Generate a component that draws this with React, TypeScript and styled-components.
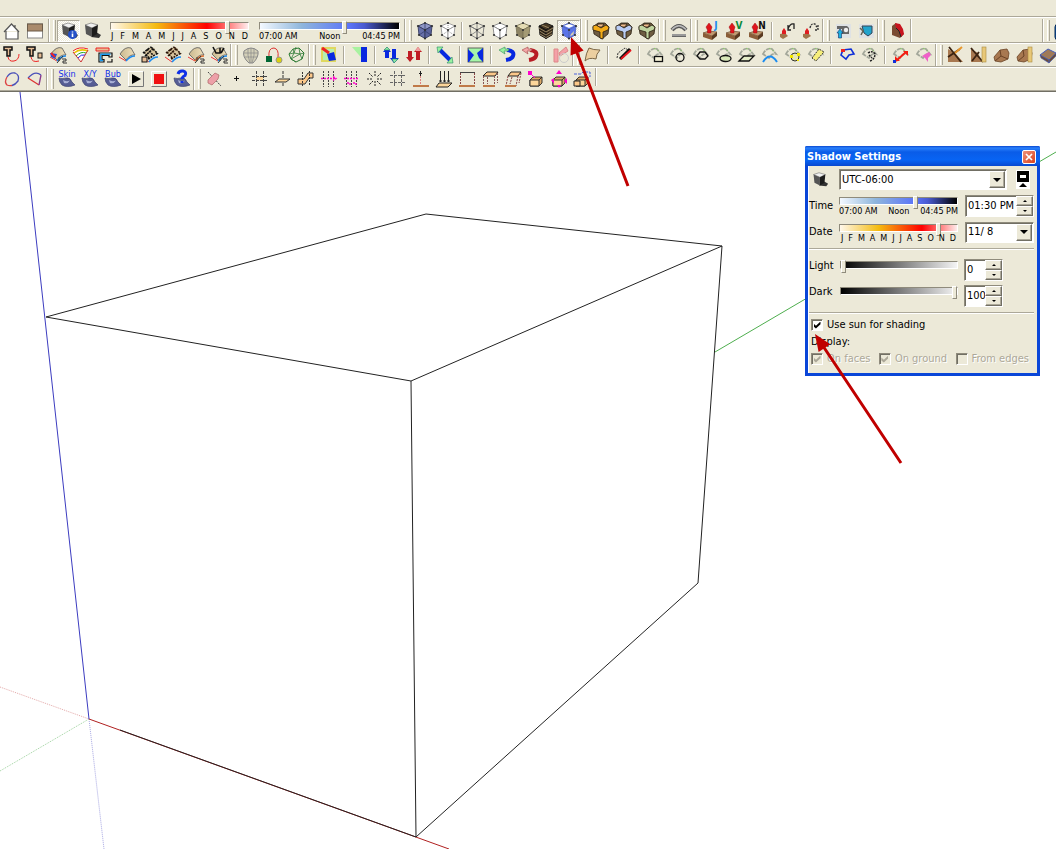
import React, { useState } from "react";
import styled, { createGlobalStyle, css } from "styled-components";

const face = "#ece9d8";
const shade = "#aca899";

const GlobalStyle = createGlobalStyle`
  *, *::before, *::after { box-sizing: border-box; }
  body {
    margin: 0;
    background: #fff;
    color: #000;
    font: 11px/14px "DejaVu Sans Condensed", "Noto Sans", Tahoma, sans-serif;
  }
  button, input, select { font: inherit; color: inherit; margin: 0; padding: 0; border-radius: 0; }
`;

const Page = styled.div`
  display: flex;
  flex-direction: column;
  min-height: 100vh;
  overflow-x: clip;
`;

const Toolbars = styled.header`
  position: relative;
  z-index: 1;
  padding-top: 17px;
  background: ${face};
  border-bottom: 1px solid #716f64;
`;

const ToolRow = styled.div`
  display: flex;
  height: 24px;
  border-top: 1px solid #fff;
  border-bottom: 1px solid ${shade};
  &:first-child {
    height: 26px;
    padding-top: 1px;
    box-shadow: 0 -1px 0 ${shade};
  }
`;

const ToolGroup = styled.div<{ $wide?: boolean; $end?: number }>`
  display: flex;
  flex: none;
  align-items: center;
  padding-right: ${(p) => p.$end ?? 0}px;
`;

const Grip = styled.div`
  flex: none;
  align-self: stretch;
  width: 9px;
  padding: 1px 0 1px 4px;
  border-left: 1px solid ${shade};
  box-shadow: inset 1px 0 0 #fff;
  &::after {
    content: "";
    display: block;
    width: 3px;
    height: 100%;
    background: ${face};
    border-left: 1px solid #fff;
    border-right: 1px solid ${shade};
  }
`;

const Separator = styled.div<{ $narrow?: boolean }>`
  flex: none;
  width: 2px;
  height: 18px;
  margin: 0 ${(p) => (p.$narrow ? 2 : 3)}px;
  border-left: 1px solid ${shade};
  border-right: 1px solid #fff;
`;

const ToolButton = styled.button<{ $pressed?: boolean }>`
  position: relative;
  flex: none;
  display: grid;
  place-items: center;
  width: 23px;
  height: 22px;
  border: 1px solid transparent;
  background: none;
  ${(p) =>
    p.$pressed &&
    css`
      border-color: ${shade} #fff #fff ${shade};
      background: repeating-conic-gradient(#fff 0 25%, ${face} 0 50%) 0 0 / 2px 2px;
    `}
`;

const Glyph = styled.svg`
  display: block;
  width: 20px;
  height: 20px;
  overflow: visible;
`;

const Sliders = styled.div`
  display: flex;
  gap: 10px;
  padding: 0 4px 0 7px;
`;

const Scale = styled.div<{ $width: number }>`
  display: flex;
  flex-direction: column;
  width: ${(p) => p.$width}px;
  padding-top: 2px;
`;

const ramps = {
  date: "linear-gradient(90deg, #fff8ec, #f4bb10 33%, #ff0000 70%, #ffecec)",
  time: "linear-gradient(90deg, #f4f9ff, #8fb6dc 30%, #5b74f8 64%, #4a5ad0 75%, #000)",
  grey: "linear-gradient(90deg, #000, #f4f4f4)",
};

const Range = styled.input<{ $ramp: keyof typeof ramps }>`
  appearance: none;
  display: block;
  width: 100%;
  height: 9px;
  background: none;
  &::-webkit-slider-runnable-track {
    height: 8px;
    margin-bottom: 1px;
    border: 1px solid;
    border-color: #8f8b7c #fff #fff #8f8b7c;
    background: ${(p) => ramps[p.$ramp]};
  }
  &::-webkit-slider-thumb {
    appearance: none;
    width: 5px;
    height: 13px;
    margin-top: -2px;
    background: ${face};
    border: 1px solid;
    border-color: #fff #8f8b7c #8f8b7c #fff;
  }
`;

const Ticks = styled.div<{ $inset?: number }>`
  display: flex;
  justify-content: space-between;
  padding: 0 ${(p) => p.$inset ?? 0}px;
  font-size: 9px;
  line-height: 10px;
  white-space: nowrap;
`;

const Canvas = styled.main`
  position: relative;
  flex: 1;
  background: #fff;
`;

const Scene = styled.svg`
  display: block;
  width: 100%;
`;

const Dialog = styled.section`
  position: absolute;
  top: 54px;
  right: 16px;
  z-index: 2;
  width: 235px;
  border: 3px solid #0a46d8;
  border-top: 0;
  border-radius: 2px 2px 0 0;
  background: ${face};
  box-shadow: inset 1px 0 0 #fff;
`;

const TitleBar = styled.div`
  display: flex;
  align-items: center;
  justify-content: space-between;
  height: 20px;
  margin: 0 -3px;
  padding: 1px 4px 0 2px;
  border-radius: 2px 2px 0 0;
  background: linear-gradient(#0a48d0, #2a80fb 10%, #0a5ce8 30%, #0864f4 70%, #0848d0);
`;

const Title = styled.h2`
  margin: 0;
  color: #fff;
  font-size: 11px;
  line-height: 14px;
`;

const CloseButton = styled.button`
  display: grid;
  place-items: center;
  width: 14px;
  height: 14px;
  border: 1px solid #fff;
  border-radius: 2px;
  background: linear-gradient(135deg, #f0937a, #d8401c);
`;

const Body = styled.div`
  padding: 3px 3px 0 1px;
`;

const Field = styled.div<{ $height: number }>`
  display: grid;
  grid-template-columns: 30px 1fr auto;
  align-items: center;
  height: ${(p) => p.$height}px;
`;

const Rule = styled.hr`
  height: 2px;
  margin: 5px 0 4px;
  border: 0;
  border-top: 1px solid ${shade};
  border-bottom: 1px solid #fff;
`;

const sunken = css`
  border: 1px solid;
  border-color: #8f8b7c #fff #fff #8f8b7c;
  box-shadow: inset 1px 1px 0 #716f64;
  background: #fff;
`;

const raised = css`
  border: 1px solid;
  border-color: #fff #716f64 #716f64 #fff;
  box-shadow: inset -1px -1px 0 ${shade};
  background: ${face};
`;

const SelectBox = styled.span<{ $width: number }>`
  position: relative;
  display: flex;
  width: ${(p) => p.$width}px;
  height: 21px;
  ${sunken}
`;

const Select = styled.select`
  appearance: none;
  flex: 1;
  min-width: 0;
  padding-left: 2px;
  border: 0;
  background: none;
  outline: 0;
`;

const DropArrow = styled.span`
  position: absolute;
  top: 1px;
  right: 1px;
  bottom: 1px;
  display: grid;
  place-items: center;
  width: 16px;
  pointer-events: none;
  ${raised}
`;

const Triangle = styled.i<{ $up?: boolean; $size: number }>`
  width: 0;
  border: ${(p) => p.$size}px solid transparent;
  border-top: ${(p) => (p.$up ? "0" : `${p.$size}px solid #000`)};
  border-bottom: ${(p) => (p.$up ? `${p.$size}px solid #000` : "0")};
`;

const SpinBox = styled.span<{ $width: number }>`
  display: flex;
  width: ${(p) => p.$width}px;
  height: 22px;
  ${sunken}
`;

const SpinInput = styled.input`
  flex: 1;
  min-width: 0;
  padding-left: 2px;
  border: 0;
  outline: 0;
  background: none;
`;

const SpinButtons = styled.span`
  display: grid;
  width: 17px;
`;

const SpinButton = styled.button`
  display: grid;
  place-items: center;
  height: 10px;
  ${raised}
`;

const Roller = styled.button`
  display: grid;
  justify-items: center;
  align-content: space-between;
  width: 14px;
  height: 19px;
  margin-right: 4px;
  padding: 0 0 1px;
  border: 1px solid #fff;
  background: #fff;
  &::before {
    content: "";
    width: 12px;
    height: 11px;
    border: solid #000;
    border-width: 4px 3px;
    background: #fff;
  }
`;

const LightRows = styled.div`
  display: grid;
  gap: 4px;
  padding-top: 5px;
`;

const LightRow = styled.div`
  display: grid;
  grid-template-columns: 31px 124px auto;
  align-items: start;
`;

const CheckLabel = styled.label<{ $off?: boolean }>`
  display: flex;
  align-items: center;
  gap: 4px;
  white-space: nowrap;
  ${(p) => p.$off && `color: ${shade}; text-shadow: 1px 1px 0 #fff;`}
`;

const Check = styled.input`
  appearance: none;
  flex: none;
  display: grid;
  place-items: center;
  width: 12px;
  height: 12px;
  ${sunken}
  &:checked::before {
    content: "";
    width: 7px;
    height: 7px;
    background: #000;
    clip-path: polygon(0 30%, 35% 60%, 100% 0, 100% 40%, 35% 100%, 0 70%);
  }
  &:disabled { background: ${face}; }
  &:disabled::before { background: ${shade}; }
`;

const Checks = styled.div`
  display: flex;
  flex-direction: column;
  gap: 3px;
  padding: 0 0 7px 2px;
`;

const CheckRow = styled.div`
  display: flex;
  justify-content: space-between;
  padding-right: 5px;
`;

const Pointer = styled.svg<{ $left: number; $top: number }>`
  position: absolute;
  left: ${(p) => p.$left}px;
  top: ${(p) => p.$top}px;
  z-index: 3;
  overflow: visible;
  pointer-events: none;
`;

/* Empty stretch of toolbar between the last docked groups */
const Spacer = styled.div`
  flex: none;
  width: 132px;
  margin-left: 1px;
  border-left: 1px solid ${shade};
  box-shadow: inset 1px 0 0 #fff;
`;

/* ---------- icon drawings, all on a 20 x 20 grid ---------- */

const Cube = ({ top, left, right, line = "#222" }: { top: string; left: string; right: string; line?: string }) => (
  <g stroke={line} strokeWidth=".9" strokeLinejoin="round">
    <path d="M10 2 L17 5 L10 9 L3 5Z" fill={top} />
    <path d="M3 5 L10 9 V17.500 L4 14Z" fill={left} />
    <path d="M10 9 L17 5 L16 14 L10 17.500Z" fill={right} />
  </g>
);

const InnerEdges = ({ c, dash }: { c: string; dash?: string }) => (
  <path d="M10 2 V10 L4 14 M10 10 L16 14" stroke={c} strokeWidth=".8" strokeDasharray={dash} fill="none" />
);

const Corners = () => (
  <g fill="#333">
    <circle cx="3" cy="5" r="1.100" /><circle cx="10" cy="2" r="1.100" /><circle cx="17" cy="5" r="1.100" /><circle cx="10" cy="9" r="1.100" />
    <circle cx="4" cy="14" r="1.100" /><circle cx="16" cy="14" r="1.100" /><circle cx="10" cy="17.500" r="1.100" />
  </g>
);

const ShadowCube = () => (
  <g>
    <path d="M9 16 L17 17 L19 14 L14 11Z" fill="#333" />
    <path d="M3 4 L9 2 L16 4 L10 7Z" fill="#f0f0f0" stroke="#666" strokeWidth=".6" />
    <path d="M3 4 L10 7 L10 16 L4 13Z" fill="#555" />
    <path d="M10 7 L16 4 L15 13 L10 16Z" fill="#1c1c1c" />
  </g>
);

const Patch = ({ edge = "#1c8cf0", fill = "url(#sand)" }: { edge?: string; fill?: string }) => (
  <g>
    <path d="M3 9 Q8 1 14 3 L18 10 Q13 9 9 15Z" fill={fill} stroke="#555" strokeWidth=".8" />
    <path d="M2 12 L9 16" stroke="#e33" fill="none" /><path d="M9 16 Q13 11 18 11" stroke={edge} fill="none" strokeWidth="1.500" />
  </g>
);

const Half = () => <path d="M9 18 L15 11 M11 12 v4 M14 14 h4 v2 h-3 v2 h4" stroke="#333" fill="none" />;

const Mesh = ({ c = "#111" }: { c?: string }) => (
  <g>
    <path d="M4 8 Q9 1 14 3 L18 9 Q13 9 9 14Z" fill="#d8c49c" />
    <path d="M3 8 L11 2 M5 11 L14 3 M8 14 L18 8 M7 4 L14 11 M4 7 L10 14 M11 2 L18 9" stroke={c} strokeWidth="1.600" strokeDasharray="2 1" />
    <path d="M2 12 L9 17" stroke="#e33" /><path d="M9 17 Q13 12 18 12" stroke="#1c8cf0" fill="none" strokeWidth="1.500" />
  </g>
);

const Sketch = () => (
  <g fill="none">
    <path d="M3 9 Q7 2 12 4 L16 9 Q12 8 9 13 Z" stroke="#a3a79a" strokeWidth="1.800" strokeDasharray="4 1" />
    <path d="M9 3.500 L12 4 L15 8" stroke="#8cc46c" strokeDasharray="2 2" />
  </g>
);

const Plank = ({ c = "#c09a70" }: { c?: string }) => (
  <g><path d="M2 12 L8 10 L16 11 L11 15Z" fill={c} stroke="#5c3d22" strokeWidth=".6" /><path d="M2 12 L11 15 V19 L2 16Z" fill="#8a5d38" /><path d="M11 15 L16 11 V15 L11 19Z" fill="#5a3a20" /></g>
);

const RedUp = () => <path d="M8 2 L11 6 L10 9 V12 H6.500 V9 L5 6Z" fill="#e0141c" stroke="#9c1014" strokeWidth=".5" />;

const Letter = ({ children, x, c, size = 10, bold }: { children: string; x: number; c: string; size?: number; bold?: boolean }) => (
  <text x={x} y="8" fontSize={size} fontWeight={bold ? 700 : 400} fontFamily="DejaVu Sans Condensed, sans-serif" fill={c} textAnchor="middle">{children}</text>
);

const Soap = () => (
  <g><path d="M2 9 Q5 10 9 9 Q13 8 15 13 L18 16 Q10 19 5 16 Q2 13 2 9Z" fill="#565d94" stroke="#3c4270" strokeWidth=".7" /><path d="M6 11 Q9 13 13 11.500 Q11 15 7 14Z" fill="#a9b0d6" /></g>
);

const Stump = ({ c }: { c: string }) => (
  <g stroke="#2c2114" strokeWidth=".8" strokeLinejoin="round">
    <path d="M2 6 L7 2 L14 2 L18 6 L17 13 L11 18 L3 13Z" fill="#6e5c42" />
    <path d="M7 3 L13 3 L11 6 H6Z" fill="#edb98a" />
    <path d="M2 5 L5 4 L10 7 L15 4 L18 6 L17 9 L12 11 V18 L9 17 V11 L2 9Z" fill={c} />
  </g>
);

const TShape = () => <path d="M2 2 H10 V5 H8 V11 H5 V5 H2Z" fill="#e6bd95" stroke="#111" strokeWidth="1.500" />;

const Box3 = () => (
  <g stroke="#222" strokeWidth=".9"><path d="M4 11 L7 8 H16 V14 L13 17 H4Z" fill="#d9a868" /><path d="M4 11 H13 V17 H4Z" fill="#fcd69a" /><path d="M13 11 L16 8" /></g>
);

const Vert = ({ pink }: { pink?: string }) => (
  <g fill="none"><path d="M4.500 2 V18 M9.500 2 V18 M14.500 2 V18" stroke="#444" strokeDasharray="2 1" /><path d={pink} stroke="#f0c" strokeDasharray="2 1" strokeWidth="1.400" /></g>
);

const Log = () => <path d="M2 12 L8 5 L15 4 L17 8 L16 14 L9 17 L3 16Z" fill="#a87850" stroke="#6a4225" strokeWidth=".8" />;

const icons: Record<string, React.ReactNode> = {
  home: <path d="M2 11 L9.500 3 L17 11 M4 10 V18 H16 V10 M13 4 V7" fill="#fff" stroke="#555" strokeWidth="1.200" />,
  panel: <g><rect x="2.500" y="3" width="15" height="14" fill="#fff" stroke="#888" /><rect x="2.500" y="3" width="15" height="7" fill="#a98a6c" stroke="#6b5a48" /></g>,
  shadowInfo: <g><ShadowCube /><circle cx="13.500" cy="13.500" r="4.500" fill="#2450c8" /><path d="M13.500 12.500 V16 M13.500 10.500 V11.500" stroke="#fff" strokeWidth="1.600" /></g>,
  shadow: <ShadowCube />,
  xray: <g><Cube top="#8f97c6" left="#6770aa" right="#5a639c" line="#333a60" /><InnerEdges c="#333c70" /><Corners /></g>,
  backEdges: <g><Cube top="#fff" left="#fff" right="#fff" line="#999" /><InnerEdges c="#777" dash="1 1" /><Corners /></g>,
  wire: <g><Cube top="none" left="none" right="none" line="#777" /><InnerEdges c="#777" /><Corners /></g>,
  hidden: <g><Cube top="#fff" left="#fff" right="#fff" line="#888" /><Corners /></g>,
  shaded: <g><Cube top="#e4dcb4" left="#8d8464" right="#a39a74" line="#7d7658" /><Corners /></g>,
  textured: <g><Cube top="#4a3a24" left="#2b2216" right="#3a2c1a" line="#111" /><path d="M3 7 L10 11 L17 7 M3.500 10 L10 14 L16.500 10 M4 13 L10 16.500 L16 13 M6 4 L13 7" stroke="#a3906a" fill="none" strokeWidth=".9" /></g>,
  mono: <g><Cube top="#5a74e8" left="#5a74e8" right="#5a74e8" line="#5468c0" /><path d="M12 13 L15 10 L14.500 13.500 L11 15.500Z" fill="#d8d0b0" /><path d="M5 4.700 L10 3 L15 4.700 L10 7Z" fill="#fff" /><Corners /></g>,
  stumpGold: <Stump c="#f2ab18" />, stumpBlue: <Stump c="#b9ccf4" />, stumpGreen: <Stump c="#c0d4a0" />,
  arc: <g fill="none"><path d="M3 9 Q10 1 17 9" stroke="#555" strokeWidth="4" /><path d="M3 8.500 Q10 1 17 8.500" stroke="#bbb" strokeWidth="1.500" /><path d="M3 14.500 H17" stroke="#666" strokeWidth="3" /><path d="M3 14 H17" stroke="#ccc" /></g>,
  upJ: <g><Plank /><RedUp /><Letter x={15} c="#1c8cf0" bold>J</Letter></g>,
  upV: <g><Plank /><RedUp /><Letter x={15} c="#0a8a3a" bold>V</Letter></g>,
  upN: <g><Plank /><RedUp /><Letter x={15} c="#111" bold>N</Letter></g>,
  upBack: <g><path d="M2 13 L7 12 L10 15 L5 18 L2 16Z" fill="#a0744a" /><path d="M6 7 L8 10 V13 H4 V10Z" fill="#e01c20" /><path d="M10 8 Q12 2 16 3 V8 M10 4 V9 H13" fill="none" stroke="#222" strokeWidth="1.300" /></g>,
  upFwd: <g><path d="M2 13 L7 12 L10 15 L5 18 L2 16Z" fill="#a0744a" /><path d="M6 7 L8 10 V13 H4 V10Z" fill="#e01c20" /><path d="M9 7 Q10 2 14 3 L17 8 M17 4 V9 H13" fill="none" stroke="#333" strokeWidth="1.300" strokeDasharray="2 1" /></g>,
  camUp: <g><rect x="3" y="3" width="15" height="14" fill="#dfe2e4" /><path d="M4 5 L14 5 L16 7 V13 H9 V8 H4Z" fill="#666" /><circle cx="13" cy="9" r="2.200" fill="#eee" /><path d="M7 8 L10 12 H8.500 V17 H5.500 V12 H4Z" fill="#1cb0e0" stroke="#136" strokeWidth=".6" /></g>,
  camShield: <g><rect x="3" y="3" width="15" height="14" fill="#dfe2e4" /><path d="M6 5 H16 V12 L12 15 L8 12Z" fill="#22a4cc" stroke="#345" /><path d="M4 7 L7 10 L5 14" stroke="#665" strokeWidth="1.500" fill="none" /></g>,
  book: <g><path d="M4 5 L8 2 L16 13 L12 17 L4 14Z" fill="#7a4b32" /><path d="M7 2 L12 3 L15 8 L16 13 L13 16 L11 10 L8 7Z" fill="#c8141e" /><path d="M8 7 L11 10 L13 16" stroke="#222" fill="none" /></g>,
  blue: <rect x="2" y="3" width="14" height="16" rx="3" fill="#0e4f9c" stroke="#052a5a" />,

  t1: <g><TShape /><path d="M6 12 Q7 17 12 16 Q17 15 17 9" stroke="#e22" fill="none" /></g>,
  t2: <g><TShape /><rect x="13" y="8" width="4" height="5" fill="#e6bd95" stroke="#111" /><path d="M6 12 Q7 18 14 16" stroke="#e22" fill="none" /></g>,
  roof: <g><Patch /><path d="M2 8 L9 9 L7 14 L3 12Z" fill="#1c50e0" /><path d="M3 8 L7 12" stroke="#e22" strokeWidth="2" /><Half /></g>,
  rainbow: <g fill="none"><path d="M2 7 Q8 1 17 4 L17 6 L10 17Z" fill="#fff" /><path d="M2 6 Q8 1 17 4" stroke="#e22" /><path d="M3 8 Q9 3 17 6" stroke="#e9c400" strokeWidth="1.500" /><path d="M5 11 Q10 6 15 8" stroke="#2a2" /><path d="M7 13 Q10 9 14 10" stroke="#22e" /><path d="M2 7 L10 17 L17 5" stroke="#c33" /></g>,
  clamp: <g fill="none"><path d="M2 3 H15 V6 H2Z" fill="#e6bd95" stroke="#e22" /><path d="M5 8 H18 V12 H15 V10.500 H8 V14.500 H10 V17 H5Z M18 14 V17 H13" stroke="#111" strokeWidth="1.200" /><path d="M6.500 9.200 H16.500 M6.500 9 V15.500 H9" stroke="#1c9cf0" strokeWidth="1.500" /></g>,
  patch: <Patch />, mesh1: <g><Mesh /><rect x="2" y="12" width="5" height="5" fill="#e6bd95" stroke="#111" /></g>, mesh2: <Mesh c="#2a1408" />,
  patchHalf: <g><Patch edge="#e07030" /><Half /></g>,
  patchCut: <g><Patch /><path d="M4 2 L7 8 L11 8 V3 M15 3 L12 8" stroke="#111" strokeWidth="1.600" fill="none" /><Half /></g>,
  shell: <g><path d="M3 6 Q10 0 17 6 Q18 12 12 18 H8 Q1 12 3 6Z" fill="#d3cfb8" stroke="#888" /><path d="M3 8 H17 M4 12 H16 M7 3 Q6 10 9 18 M10 3 V18 M13 3 Q14 10 11 18" stroke="#888" strokeWidth=".7" fill="none" /></g>,
  hook: <g><path d="M5 12 Q4 3 10 3 Q15 4 14 12" stroke="#d33" fill="none" /><rect x="2" y="11" width="6" height="6" fill="#063" /><circle cx="15" cy="15" r="3" fill="#d9d010" stroke="#998" /></g>,
  gem: <g fill="none" stroke="#2c7a34"><path d="M2 9 L6 4 L12 3 L17 8 L15 14 L9 17 L4 14Z" /><path d="M6 4 L7 8 L13 9 L12 3 M7 8 L4 14 L9 17 M13 9 L17 8 M13 9 L15 14 M7 8 L2 9 M4 14 L13 9 M9 2 L7 8" strokeWidth=".8" /></g>,
  sq1: <g><rect x="3" y="3" width="13" height="13" fill="#b6f0b0" stroke="#dfd860" strokeWidth="2" /><path d="M8 9 L15 7 L17 15 L10 16Z" fill="#0828e0" /><path d="M3 3 L10 8" stroke="#e22" strokeWidth="3" /></g>,
  tri: <g><path d="M2 2 L13 2 L15 17Z" fill="#a8f2a0" /><rect x="11" y="2" width="6" height="15" fill="#0828e0" /></g>,
  upDownBlue: <g><path d="M6 2 L10 7 H8 V13 H4 V7 H2Z" fill="#0828e0" /><path d="M13 18 L9 13 H11 V4 H15 V13 H18Z" fill="#0828e0" /><path d="M6 2 L9 5 H3Z M13 18 L17 14 H11Z" fill="#8fe8a0" stroke="#286" strokeWidth=".6" /></g>,
  upDownRed: <g><path d="M6 17 L2 12 H4 V6 H8 V12 H10Z" fill="#c01c24" /><path d="M14 2 L18 7 H16 V15 H12 V7 H10Z" fill="#c01c24" /><path d="M14 2 L17 6 H11Z" fill="#f0a0a0" /></g>,
  diag: <g><path d="M5 5 L15 15" stroke="#0828e0" strokeWidth="4" /><path d="M2 2 H8 L3 8Z M18 18 H12 L17 12Z" fill="#9af2a0" stroke="#286" strokeWidth=".6" /></g>,
  bow: <g><rect x="2" y="3" width="15" height="14" fill="#a6f6a8" stroke="#444" strokeWidth=".8" /><path d="M2 4 L8 10 L3 17 L2 17Z M17 3 L11 8 L13 13 L17 17Z" fill="#0828e0" /></g>,
  turnBlue: <g fill="none"><path d="M10 5 Q18 6 16 11 Q15 14 9 15" stroke="#0828e0" strokeWidth="4" /><path d="M8 2 L2 5 L8 9 L7 6 H11 L12 4 H8Z" fill="#9af2a0" stroke="#496" strokeWidth=".7" /></g>,
  turnRed: <g fill="none"><path d="M10 5 Q18 6 16 11 Q15 14 9 15" stroke="#b81c24" strokeWidth="4" /><path d="M8 2 L2 5 L8 9 L7 6 H11 L12 4 H8Z" fill="#f4a8a8" stroke="#a55" strokeWidth=".7" /></g>,
  pinkTurn: <g><path d="M3 4 H7 V17 H3Z M8 8 L15 2 L17 6 L9 11Z" fill="#f4a0a8" stroke="#d88" /><circle cx="13" cy="13" r="4.500" fill="none" stroke="#ccc" /></g>,
  sheet: <path d="M2 16 Q3 8 6 3 Q10 5 17 5 Q13 9 13 14 Q6 12 2 16Z" fill="#eccfa0" stroke="#7c6746" />,
  knife: <g><path d="M3 13 L4 8 L11 3 L14 5" stroke="#333" fill="none" strokeDasharray="2 1" /><path d="M6 14 L16 4" stroke="#111" strokeWidth="3" /><path d="M7 14 L17 5" stroke="#e8141c" strokeWidth="2" /></g>,
  skRect: <g><Sketch /><rect x="9.500" y="11.500" width="8" height="5" fill="#f6f2d8" stroke="#111" strokeWidth="1.300" /></g>,
  skCircle: <g><Sketch /><circle cx="12" cy="12.500" r="4" fill="none" stroke="#111" strokeWidth="1.300" /></g>,
  skHex: <g><Sketch /><path d="M6 11 L9 7 H14 L17 11 L14 14 H9Z" fill="none" stroke="#111" strokeWidth="1.300" /></g>,
  skOval: <g><Sketch /><ellipse cx="11.500" cy="13.500" rx="5.500" ry="3" fill="#d8e8b8" stroke="#111" strokeWidth="1.300" /></g>,
  skPara: <g><Sketch /><path d="M2 16 L7 11 H17 L12 16Z" fill="#e4ecc8" stroke="#111" strokeWidth="1.300" /></g>,
  skArc: <g><Sketch /><path d="M3 17 Q10 6 17 17" fill="none" stroke="#1c8cf0" strokeWidth="2" /></g>,
  skSpot: <g><Sketch /><circle cx="12" cy="12" r="4" fill="#e8e8b0" stroke="#333" /><path d="M7 10 h3 v3 h-3z M14 8 h3 v3 h-3z M14 14 h2 v2 h-2z" fill="#f4e800" /></g>,
  skTag: <g><Sketch /><path d="M6 13 L13 4 L18 7 L10 16Z" fill="#f6ee7a" stroke="#333" strokeDasharray="2 1" /></g>,
  bluePatch: <g><path d="M4 10 L6 5 L14 4 L17 9 L12 10 L9 14Z" fill="none" stroke="#1030d8" strokeWidth="1.600" /><rect x="4" y="4" width="4" height="3" fill="#e22" /></g>,
  skLoop: <g><Sketch /><path d="M8 8 Q12 5 15 9 Q15 14 10 16 M9 10 L12 13" fill="none" stroke="#222" strokeDasharray="2 1" strokeWidth="1.500" /></g>,
  skArrow: <g><Sketch /><path d="M5 16 L15 7" stroke="#f41c10" strokeWidth="2" /><path d="M12 6 H17 V11Z M4 11 V16 H9Z" fill="#f41c10" /><rect x="2" y="15" width="3" height="3" fill="#1030d8" /></g>,
  skPink: <g><Sketch /><path d="M8 11 L15 7 L17 10 L14 13 L14 17 L11 13Z" fill="#f060c8" /></g>,
  wood1: <g><path d="M2 4 L9 8 L17 17 H2Z" fill="#a87850" /><path d="M3 2 L15 17 M2 12 L14 4" stroke="#3c2412" strokeWidth="1.800" /><path d="M9 8 L16 2" stroke="#e8962c" strokeWidth="2" /></g>,
  wood2: <g><path d="M2 4 L9 8 L13 17 H2Z" fill="#a87850" /><path d="M2 3 L14 17 M3 16 L10 7" stroke="#3c2412" strokeWidth="1.800" /><rect x="13" y="2" width="4" height="15" fill="#e8c878" stroke="#a88a40" strokeWidth=".6" /></g>,
  log1: <g><Log /><path d="M8 5 L9 11 L16 14 M9 11 L3 16" stroke="#6a4225" fill="none" /></g>,
  log2: <g><Log /><path d="M8 5 L9 11 L3 16" stroke="#6a4225" fill="none" /><rect x="13" y="2" width="4" height="15" fill="#e8c878" stroke="#a88a40" strokeWidth=".6" /></g>,
  tile: <g><path d="M2 10 L10 4 L18 8 L11 15Z" fill="#a07a58" stroke="#445cb8" /><path d="M2 10 L11 15 V18 L3 13Z M11 15 L18 8 V11 L11 18Z" fill="#6c4c34" stroke="#445cb8" strokeWidth=".6" /></g>,

  blob: <g fill="none" strokeWidth="1.300"><path d="M5 8 Q8 3 13 4 Q18 6 16 12 Q13 16 10 16.500" stroke="#4a50b8" /><path d="M5 8 Q2 13 5 16 Q7 17 10 16.500" stroke="#d44" /></g>,
  fan: <g fill="none" strokeWidth="1.300"><path d="M3 9 Q10 1 16 6" stroke="#4a50b8" /><path d="M3 9 L14 16" stroke="#d33" /><path d="M14 16 L16 6" stroke="#86388c" /></g>,
  skin: <g><Soap /><Letter x={10} c="#1030e8" size={9}>Skin</Letter></g>,
  xy: <g><Soap /><Letter x={10} c="#1030e8" size={9}>X/Y</Letter></g>,
  bub: <g><Soap /><Letter x={10} c="#1030e8" size={9}>Bub</Letter></g>,
  play: <g><path d="M2.500 17.500 V2.500 H17.500" stroke="#fff" fill="none" /><path d="M17.500 2.500 V17.500 H2.500" stroke="#777" fill="none" /><path d="M6 5 L15 10 L6 15Z" /></g>,
  stop: <g><path d="M2.500 17.500 V2.500 H17.500" stroke="#fff" fill="none" /><path d="M17.500 2.500 V17.500 H2.500" stroke="#777" fill="none" /><rect x="5" y="5" width="10" height="10" fill="#f01010" /></g>,
  help: <g><Soap /><path d="M6 5 Q7 1.500 11 2 Q15 3 13 6.500 Q10 8 10 10 M10 12 V14" stroke="#1030e8" strokeWidth="3" fill="none" /></g>,
  eraser: <g><path d="M4 3 L17 17" stroke="#444" strokeDasharray="2 1" /><path d="M4 11 L11 4 L15 6 L14 10 L8 16 L4 14Z" fill="#eda0a8" stroke="#a66" strokeWidth=".7" /></g>,
  dot: <path d="M9.500 7 V12 M7 9.500 H12" stroke="#111" />,
  grid1: <g><path d="M6 8 H13 V11 H6Z" fill="#fcd69a" /><path d="M6.500 2 V18 M13.500 2 V18 M2 7.500 H18 M2 11.500 H18" stroke="#444" strokeDasharray="3 1" /></g>,
  plane1: <g><path d="M10 2 V18" stroke="#333" strokeDasharray="3 1" /><path d="M2 13 L6 10 H17 L13 13Z" fill="#fcd69a" stroke="#333" /></g>,
  step: <g><path d="M2 10 H8 L12 4 H17 V9 H13 L9 15 H2Z" fill="#fcc88a" stroke="#333" /><path d="M6.500 3 V18 M13.500 2 V17" stroke="#333" strokeDasharray="2 1" /></g>,
  v1: <Vert pink="M2 9.500 H16 M14 7.500 L17 9.500 L14 11.500" />,
  v2: <Vert pink="M2 9.500 H17 M5 14 H8 V17 M11 14 H14 V17" />,
  burst: <path d="M10 2 V7 M10 12 V18 M2 10 H7 M12 10 H18 M4 4 L8 8 M12 12 L16 16 M16 4 L12 8 M8 12 L4 16" stroke="#222" strokeDasharray="2 1" />,
  hash: <path d="M6.500 2 V18 M13.500 2 V18 M2 6.500 H18 M2 13.500 H18" stroke="#666" strokeDasharray="3 1" />,
  pole: <g><path d="M9.500 4 V16" stroke="#e08080" strokeDasharray="2 1" /><path d="M2 17 H18" stroke="#c07a48" strokeWidth="2" /><path d="M8 4.500 H11 M9.500 2 V7" stroke="#222" /></g>,
  poles: <g><path d="M2 18 L5 14 H18 L14 18Z" fill="#fcd69a" stroke="#222" /><path d="M6.500 2 V13 M10.500 2 V13 M14.500 2 V13 M5 12 h3 M9 12 h3 M13 12 h3" stroke="#222" /></g>,
  frame: <g><path d="M3 3.500 H18" stroke="#444" /><path d="M3.500 4 V17 M17.500 4 V17" stroke="#844" strokeDasharray="2 1" /><path d="M2 17 H18" stroke="#c07a48" strokeWidth="2" /></g>,
  frame3: <g><path d="M3 7 L7 3 H18 L15 7Z" fill="#fcc88a" stroke="#222" /><path d="M3.500 7 V17 M14.500 7 V17 M17.500 4 V14 M7.500 8 V15" stroke="#855" strokeDasharray="2 1" /><path d="M3 17 H15" stroke="#c07a48" strokeWidth="2" /></g>,
  frameSkew: <g><path d="M5 7 L8 3 H18 L15 7Z" fill="#fcc88a" stroke="#222" /><path d="M5 7 L3 17 M15 7 L13 17 M18 4 L16 14 M9 8 L7 15" stroke="#844" strokeDasharray="2 1" /><path d="M2 17 H13" stroke="#c07a48" strokeWidth="2" /></g>,
  boxDot: <g><Box3 /><path d="M2 2 h4 v4 h-4z" fill="#f0c" /><path d="M5 5 L9 9" stroke="#f0c" /></g>,
  boxArrows: <g><Box3 /><path d="M10 1 L13 5 H7Z M2 11 L5 9 V15Z M18 9 V15 L15 12Z M8 16 H12 L10 19Z" fill="#f0c" /></g>,
  boxes: <g><Box3 /><path d="M2 5 H9 L11 3 H18 V8" stroke="#4a60d8" fill="none" strokeDasharray="3 1" /><path d="M2 12 H8 V17 H2Z" fill="#fcc88a" stroke="#222" /></g>,
};

const Tool = ({ name, pressed, children }: { name: string; pressed?: boolean; children?: React.ReactNode }) => (
  <ToolButton type="button" aria-label={name} aria-pressed={pressed} $pressed={pressed}>
    <Glyph viewBox="0 0 20 20" aria-hidden="true">{icons[name]}</Glyph>
    {children}
  </ToolButton>
);

/* "|" stands for a separator between two runs of buttons */
const Tools = ({ names, end }: { names: string; end?: number }) => (
  <ToolGroup $end={end}>
    {names.split(" ").map((n, i) => (n === "|" ? <Separator key={i} /> : <Tool key={i} name={n} />))}
  </ToolGroup>
);

const months = "JFMAMJJASOND".split("");
const hours = ["07:00 AM", "Noon", "04:45 PM"];

const Slider = ({ ramp, label, id, value, width, ticks, inset }: {
  ramp: keyof typeof ramps; label: string; id?: string; value: number; width: number; ticks?: string[]; inset?: number;
}) => {
  const [v, setV] = useState(value);
  return (
    <Scale $width={width}>
      <Range type="range" id={id} aria-label={label} $ramp={ramp} value={v} onChange={(e) => setV(+e.target.value)} />
      {ticks && <Ticks $inset={inset}>{ticks.map((t, i) => <span key={i}>{t}</span>)}</Ticks>}
    </Scale>
  );
};

const Arrow = ({ left, top, dx, dy }: { left: number; top: number; dx: number; dy: number }) => {
  const turn = (Math.atan2(dy, dx) * 180) / Math.PI;
  return (
    <Pointer $left={left} $top={top} width="1" height="1" aria-hidden="true">
      <g transform={`rotate(${turn})`} fill="#c00000">
        <path d={`M0 0 L17 -7 V7Z M15 -1.500 H${Math.hypot(dx, dy)} V1.500 H15Z`} />
      </g>
    </Pointer>
  );
};

const Spin = ({ id, value, width }: { id: string; value: string; width: number }) => (
  <SpinBox $width={width}>
    <SpinInput id={id} defaultValue={value} />
    <SpinButtons>
      <SpinButton type="button" aria-label="Increase"><Triangle $up $size={2} /></SpinButton>
      <SpinButton type="button" aria-label="Decrease"><Triangle $size={2} /></SpinButton>
    </SpinButtons>
  </SpinBox>
);

const ShadowSettings = () => (
  <Dialog aria-label="Shadow Settings">
    <TitleBar>
      <Title>Shadow Settings</Title>
      <CloseButton type="button" aria-label="Close">
        <svg width="8" height="8" viewBox="0 0 8 8"><path d="M1 1 L7 7 M7 1 L1 7" stroke="#fff" strokeWidth="1.700" /></svg>
      </CloseButton>
    </TitleBar>
    <Body>
      <Field $height={21}>
        <Glyph viewBox="-2 -1 22 22" aria-hidden="true"><ShadowCube /></Glyph>
        <SelectBox $width={168}>
          <Select aria-label="Time zone"><option>UTC-06:00</option></Select>
          <DropArrow><Triangle $size={4} /></DropArrow>
        </SelectBox>
        <Roller type="button" aria-label="Hide details"><Triangle $up $size={4} /></Roller>
      </Field>
      <Field $height={31}>
        <label htmlFor="time">Time</label>
        <Slider ramp="time" label="Time of day" value={65} width={119} ticks={hours} />
        <Spin id="time" value="01:30 PM" width={69} />
      </Field>
      <Field $height={22}>
        <label htmlFor="date">Date</label>
        <Slider ramp="date" label="Day of year" value={86} width={119} ticks={months} inset={2} />
        <SelectBox $width={69}>
          <Select id="date"><option>11/ 8</option></Select>
          <DropArrow><Triangle $size={4} /></DropArrow>
        </SelectBox>
      </Field>
      <Rule />
      <LightRows>
        <LightRow>
          <label htmlFor="light">Light</label>
          <Slider ramp="grey" label="Light level" value={0} width={118} />
          <Spin id="light" value="0" width={39} />
        </LightRow>
        <LightRow>
          <label htmlFor="dark">Dark</label>
          <Slider ramp="grey" label="Dark level" value={100} width={118} />
          <Spin id="dark" value="100" width={39} />
        </LightRow>
      </LightRows>
      <Rule />
      <Checks>
        <CheckLabel><Check type="checkbox" defaultChecked />Use sun for shading</CheckLabel>
        <span>Display:</span>
        <CheckRow>
          <CheckLabel $off><Check type="checkbox" defaultChecked disabled />On faces</CheckLabel>
          <CheckLabel $off><Check type="checkbox" defaultChecked disabled />On ground</CheckLabel>
          <CheckLabel $off><Check type="checkbox" disabled />From edges</CheckLabel>
        </CheckRow>
      </Checks>
    </Body>
    <Arrow left={7} top={188} dx={86} dy={129} />
  </Dialog>
);

export default function App() {
  return (
    <Page>
      <GlobalStyle />
      <Toolbars>
        <ToolRow>
          <Tools names="home panel" end={2} />
          <Grip />
          <ToolGroup>
            <Tool name="shadowInfo" pressed />
            <Tool name="shadow" />
            <Sliders>
              <Slider ramp="date" label="Month" value={86} width={139} ticks={months} inset={1} />
              <Slider ramp="time" label="Hour" value={61} width={141} ticks={hours} />
            </Sliders>
          </ToolGroup>
          <Grip />
          <ToolGroup>
            <Tool name="xray" />
            <Tool name="backEdges" />
            <Separator $narrow />
            <Tool name="wire" />
            <Tool name="hidden" />
            <Tool name="shaded" />
            <Tool name="textured" />
            <Tool name="mono" pressed>
              <Arrow left={13} top={16} dx={57} dy={149} />
            </Tool>
          </ToolGroup>
          <Grip />
          <Tools names="stumpGold stumpBlue stumpGreen" />
          <Grip />
          <Tools names="arc" />
          <Grip />
          <Tools names="upJ upV upN | upBack upFwd" />
          <Grip />
          <Tools names="camUp camShield" />
          <Grip />
          <Tools names="book" />
          <Spacer />
          <Grip />
          <Tools names="blue" />
        </ToolRow>
        <ToolRow>
          <Tools names="t1 t2 roof rainbow clamp patch mesh1 mesh2 patchHalf patchCut" />
          <Grip />
          <Tools names="shell hook gem" />
          <Grip />
          <Tools names="sq1 | tri | upDownBlue upDownRed | diag | bow | turnBlue turnRed | pinkTurn" />
          <Grip />
          <Tools names="sheet | knife | skRect skCircle skHex skOval skPara skArc skSpot skTag | bluePatch skLoop | skArrow skPink" />
          <Grip />
          <Tools names="wood1 wood2 log1 log2 tile" />
        </ToolRow>
        <ToolRow>
          <Tools names="blob fan" />
          <Grip />
          <Tools names="skin xy bub play stop help" />
          <Grip />
          <Tools names="eraser dot grid1 plane1 step v1 v2 burst hash pole poles frame frame3 frameSkew boxDot boxArrows boxes" />
          <Separator $narrow />
        </ToolRow>
      </Toolbars>
      <Canvas>
        <Scene viewBox="0 0 1056 757" role="img" aria-label="Box model">
          <linearGradient id="sand"><stop offset="0" stopColor="#cbb98f" /><stop offset="1" stopColor="#efe0bc" /></linearGradient>
          <g fill="none" strokeWidth="1">
            <g strokeDasharray="1 1">
              <path d="M0 595 L89 627" stroke="#e4a8a8" />
              <path d="M0 679 L89 627" stroke="#a0d4a0" />
              <path d="M89 627 L104 757" stroke="#a8a8e4" />
            </g>
            <path d="M715 260 L1056 60" stroke="#4eae4e" />
            <path d="M89 627 L449 757" stroke="#b02020" />
            <g stroke="#222">
              <path d="M46 225 L426 122 L722 154 L411 289 Z" />
              <path d="M411 289 L416 745 L698 491 L722 154" />
              <path d="M120 638 L416 745" />
            </g>
            <path d="M20 0 L89 627" stroke="#3c3cc0" />
          </g>
        </Scene>
        <ShadowSettings />
      </Canvas>
    </Page>
  );
}
